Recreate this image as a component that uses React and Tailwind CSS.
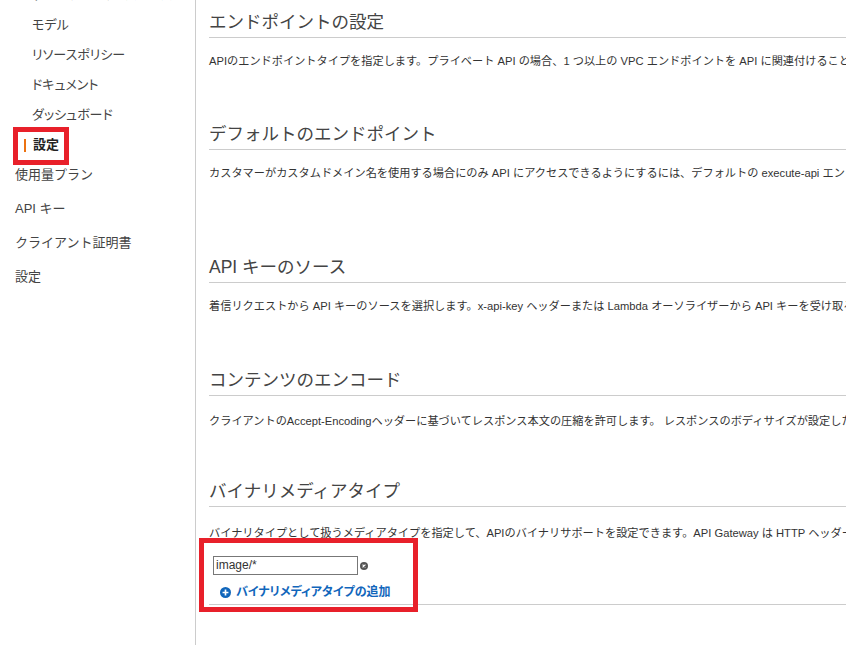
import React from "react";

const font = {
  fontFamily: '"Liberation Sans", "Noto Sans CJK JP", sans-serif',
};

const subItems = ["ゲートウェイのレスポンス", "モデル", "リソースポリシー", "ドキュメント", "ダッシュボード"];
const topItems = ["使用量プラン", "API キー", "クライアント証明書", "設定"];

const sections = [
  {
    title: "エンドポイントの設定",
    text: "APIのエンドポイントタイプを指定します。プライベート API の場合、1 つ以上の VPC エンドポイントを API に関連付けることができます。",
    mt: "mt-[10px]",
    pmt: "mt-[15px]",
  },
  {
    title: "デフォルトのエンドポイント",
    text: "カスタマーがカスタムドメイン名を使用する場合にのみ API にアクセスできるようにするには、デフォルトの execute-api エンドポイントを無効にします。",
    mt: "mt-[53px]",
    pmt: "mt-[15px]",
  },
  {
    title: "API キーのソース",
    text: "着信リクエストから API キーのソースを選択します。x-api-key ヘッダーまたは Lambda オーソライザーから API キーを受け取ることができます。",
    mt: "mt-[74px]",
    pmt: "mt-[15px]",
  },
  {
    title: "コンテンツのエンコード",
    text: "クライアントのAccept-Encodingヘッダーに基づいてレスポンス本文の圧縮を許可します。 レスポンスのボディサイズが設定したしきい値以上の場合に圧縮されます。",
    mt: "mt-[54px]",
    pmt: "mt-[17px]",
  },
];

function Heading({ children }) {
  return (
    <h2 className="text-[17.5px] leading-[24px] text-[#444] pb-[3px] border-b border-[#cccccc] whitespace-nowrap">
      {children}
    </h2>
  );
}

export default function App() {
  return (
    <div className="relative w-[846px] h-[658px] overflow-hidden bg-white flex items-start" style={font}>
      {/* sidebar */}
      <nav className="w-[196px] h-[645px] shrink-0 border-r border-[#cccccc] text-[13px] text-[#444]">
        <ul className="-mt-[20px] [font-feature-settings:'palt']">
          {subItems.map((item) => (
            <li key={item} className="h-[30px] flex items-center pl-[32px] whitespace-nowrap">
              {item}
            </li>
          ))}
          <li className="h-[30px] flex items-center pl-[24px] font-bold text-[#222]">
            <span className="w-[2px] h-[13px] bg-[#ec7211] mr-[7px]" />
            設定
          </li>
        </ul>
        <ul className="-mt-[2px]">
          {topItems.map((item, i) => (
            <li key={i} className="h-[34px] flex items-center pl-[15px] whitespace-nowrap">
              {item}
            </li>
          ))}
        </ul>
      </nav>

      {/* main */}
      <main className="flex-1 min-w-0 pl-[13px] text-[11.2px] text-[#333]">
        {sections.map((s) => (
          <section key={s.title} className={s.mt}>
            <Heading>{s.title}</Heading>
            <p className={`${s.pmt} leading-[16px] whitespace-nowrap`}>{s.text}</p>
          </section>
        ))}

        <section className="mt-[50px]">
          <Heading>バイナリメディアタイプ</Heading>
          <p className="mt-[18px] leading-[16px] whitespace-nowrap">
            バイナリタイプとして扱うメディアタイプを指定して、APIのバイナリサポートを設定できます。API Gateway は HTTP ヘッダーの Content-Type と Accept を確認して、ペイロードの扱いを決定します。
          </p>
          <div className="border-b border-[#cccccc] pb-[4px]">
            <div className="mt-[15px] flex items-center pl-[4px]">
              <div className="w-[145px] h-[19px] border border-[#777] px-[2px] text-[12px] leading-[17px] text-[#333]">
                image/*
              </div>
              <svg width="8" height="8" viewBox="0 0 10 10" className="ml-[2px]">
                <circle cx="5" cy="5" r="5" fill="#555" />
                <path d="M3.2 3.2 L6.8 6.8 M6.8 3.2 L3.2 6.8" stroke="#fff" strokeWidth="1.4" />
              </svg>
            </div>
            <div className="mt-[9px] flex items-center pl-[11px] h-[16px] text-[12px] text-[#1166bb] font-bold [font-feature-settings:'palt']">
              <svg width="11" height="11" viewBox="0 0 12 12" className="mr-[5px]">
                <circle cx="6" cy="6" r="6" fill="#1166bb" />
                <path d="M6 2.8 V9.2 M2.8 6 H9.2" stroke="#fff" strokeWidth="1.8" />
              </svg>
              バイナリメディアタイプの追加
            </div>
          </div>
        </section>
      </main>

      {/* annotation boxes */}
      <div className="absolute left-[13px] top-[127px] w-[56px] h-[38px] border-[5px] border-[#e8202a]" />
      <div className="absolute left-[199px] top-[538px] w-[219px] h-[74px] border-[5px] border-[#e8202a]" />
    </div>
  );
}
